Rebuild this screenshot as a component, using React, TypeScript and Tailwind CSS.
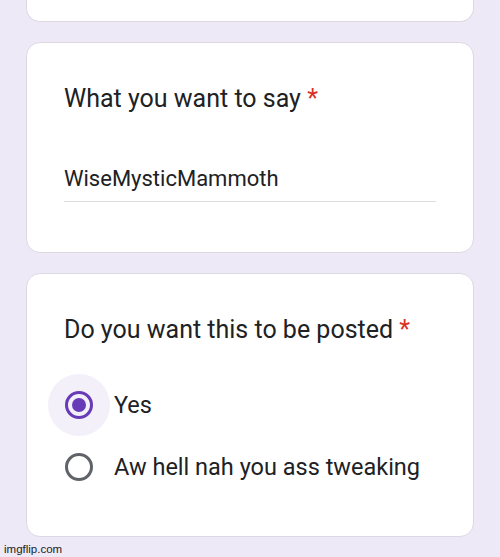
import React from 'react';

function Radio({ checked }: { checked: boolean }) {
  return (
    <div className="relative w-[28px] h-[28px] shrink-0 flex items-center justify-center">
      {checked && <div className="absolute w-[62px] h-[62px] rounded-full bg-[#f3f0fa] left-[-17px] top-[-17px]" />}
      <div
        className={
          checked
            ? 'relative w-[28px] h-[28px] rounded-full border-[3px] border-[#673ab7] flex items-center justify-center'
            : 'relative w-[28px] h-[28px] rounded-full border-[3px] border-[#5f6368]'
        }
      >
        {checked && <div className="w-[14px] h-[14px] rounded-full bg-[#673ab7]" />}
      </div>
    </div>
  );
}

export default function App() {
  return (
    <div className="w-[500px] h-[557px] overflow-hidden bg-[#ede9f7] relative" style={{ fontFamily: 'Roboto, "Noto Sans", sans-serif' }}>
      {/* previous card, cut off */}
      <div className="mx-[26px] h-[22px] bg-white rounded-b-[14px] border border-t-0 border-[#dcd9e3]" />

      {/* short answer */}
      <div className="mx-[26px] mt-[20px] h-[211px] bg-white rounded-[14px] border border-[#dcd9e3] px-[37px] pt-[41px]">
        <h2 className="text-[25px] leading-[30px] text-[#202124]">
          What you want to say <span className="text-[#d93025]">*</span>
        </h2>
        <div className="mt-[52px] w-[372px] border-b border-[#dadce0] pb-[9px]">
          <p className="text-[22px] leading-[26px] text-[#202124]">WiseMysticMammoth</p>
        </div>
      </div>

      {/* radio question */}
      <div className="mx-[26px] mt-[20px] h-[264px] bg-white rounded-[14px] border border-[#dcd9e3] px-[37px] pt-[41px]">
        <h2 className="text-[25px] leading-[30px] text-[#202124]">
          Do you want this to be posted <span className="text-[#d93025]">*</span>
        </h2>
        <div className="mt-[46px] flex flex-col gap-[34px] pl-[1px]">
          <div className="flex items-center gap-[21px]">
            <Radio checked />
            <span className="text-[23.5px] leading-[28px] text-[#202124]">Yes</span>
          </div>
          <div className="flex items-center gap-[21px]">
            <Radio checked={false} />
            <span className="text-[23.5px] leading-[28px] text-[#202124]">Aw hell nah you ass tweaking</span>
          </div>
        </div>
      </div>

      <div className="pl-[4px] mt-[5px] text-[11.5px] leading-[14px] text-[#202124]" style={{ fontFamily: '"Liberation Sans", Arial, sans-serif' }}>imgflip.com</div>
      <div className="ml-[27px] mt-[4px] w-[153px] h-[3px] rounded-full bg-[#d9d2ee]" />
    </div>
  );
}
